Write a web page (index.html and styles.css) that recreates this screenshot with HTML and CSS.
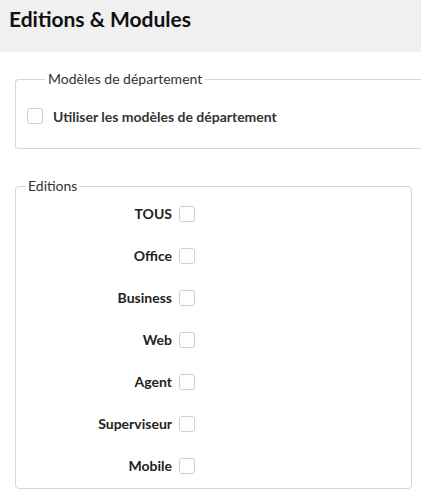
FILE: index.html
```html
<!DOCTYPE html>
<html lang="fr">
<head>
<meta charset="utf-8">
<title>Editions &amp; Modules</title>
<link rel="stylesheet" href="styles.css">
</head>
<body>
<header class="page-header">
  <h1 class="page-title">Editions &amp; Modules</h1>
</header>
<main class="content">
  <fieldset class="group group-wide">
    <legend class="group-legend legend-wide">Modèles de département</legend>
    <label class="inline-check">
      <input type="checkbox" class="check">
      <span class="inline-label">Utiliser les modèles de département</span>
    </label>
  </fieldset>

  <fieldset class="group group-editions">
    <legend class="group-legend legend-narrow">Editions</legend>
    <div class="edition-list">
      <label class="edition-row"><span class="edition-label">TOUS</span><input type="checkbox" class="check"></label>
      <label class="edition-row"><span class="edition-label">Office</span><input type="checkbox" class="check"></label>
      <label class="edition-row"><span class="edition-label">Business</span><input type="checkbox" class="check"></label>
      <label class="edition-row"><span class="edition-label">Web</span><input type="checkbox" class="check"></label>
      <label class="edition-row"><span class="edition-label">Agent</span><input type="checkbox" class="check"></label>
      <label class="edition-row"><span class="edition-label">Superviseur</span><input type="checkbox" class="check"></label>
      <label class="edition-row"><span class="edition-label">Mobile</span><input type="checkbox" class="check"></label>
    </div>
  </fieldset>
</main>
</body>
</html>
```

FILE: styles.css
```css
html {
  overflow: hidden;
}

body {
  margin: 0;
  font-family: Lato, "Open Sans", "Liberation Sans", sans-serif;
  color: #222;
  background: #fff;
}

.page-header {
  height: 52px;
  background: #f0f0f0;
  padding: 0 9px;
  box-sizing: border-box;
}

.page-title {
  margin: 0;
  padding-top: 5px;
  font-size: 21px;
  line-height: 27px;
  font-weight: 700;
  color: #111;
}

.content {
  padding: 18px 0 0 15px;
}

.group {
  margin: 0;
  border: 1px solid #d6d6d6;
  border-radius: 4px;
  padding: 0;
  min-width: 0;
}

.group-wide {
  border-right: none;
  border-radius: 4px 0 0 4px;
  padding: 20px 0 24px 11px;
}

.group-editions {
  margin-top: 28px;
  width: 397px;
  box-sizing: border-box;
  padding: 10px 0 15px 0;
}

.group-legend {
  font-size: 14px;
  line-height: 18px;
  color: #333;
  padding: 0 3px;
}

.legend-wide {
  margin-left: 18px;
}

.legend-narrow {
  margin-left: 10px;
  padding: 0 2px;
}

.check {
  appearance: none;
  -webkit-appearance: none;
  margin: 0;
  width: 16px;
  height: 16px;
  border: 1px solid #cfcfcf;
  border-radius: 3px;
  background: #fff;
  box-sizing: border-box;
  flex: none;
}

.inline-check {
  display: flex;
  align-items: center;
  gap: 10px;
  height: 16px;
}

.inline-label {
  font-size: 14px;
  font-weight: 700;
  color: #333;
}

.edition-list {
  display: flex;
  flex-direction: column;
  gap: 26px;
}

.edition-row {
  display: grid;
  grid-template-columns: 156px 16px;
  column-gap: 7px;
  align-items: center;
  height: 16px;
}

.edition-label {
  text-align: right;
  font-size: 14px;
  font-weight: 700;
  color: #222;
}
```
